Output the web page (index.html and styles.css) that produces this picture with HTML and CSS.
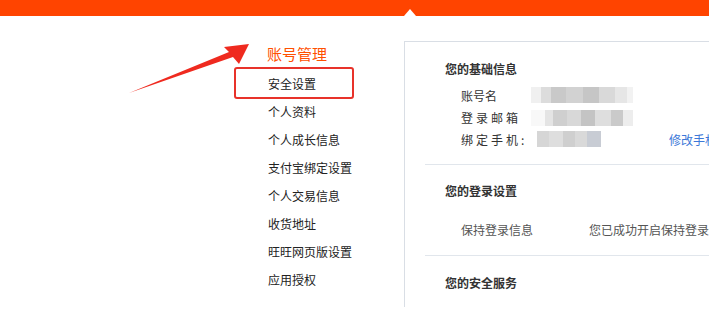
FILE: index.html
```html
<!DOCTYPE html>
<html lang="zh-CN">

<head>
  <meta charset="UTF-8">
  <title>账号管理 - 安全设置</title>
  <link rel="stylesheet" href="styles.css">
</head>

<body>
  <div class="topbar"></div>

  <div class="main">
    <div class="side">
      <h3 class="side-title">账号管理</h3>
      <ul class="menu">
        <li class="menu-item current">安全设置<span class="mark"></span></li>
        <li class="menu-item">个人资料</li>
        <li class="menu-item">个人成长信息</li>
        <li class="menu-item">支付宝绑定设置</li>
        <li class="menu-item">个人交易信息</li>
        <li class="menu-item">收货地址</li>
        <li class="menu-item">旺旺网页版设置</li>
        <li class="menu-item">应用授权</li>
      </ul>
    </div>

    <div class="panel">
      <div class="section first">
        <h4 class="section-title">您的基础信息</h4>
        <div class="info-row">
          <span class="label">账号名</span>
          <span class="mosaic m1"></span>
        </div>
        <div class="info-row">
          <span class="label spaced">登录邮箱</span>
          <span class="mosaic m2"></span>
        </div>
        <div class="info-row">
          <span class="label spaced">绑定手机:</span>
          <span class="mosaic m3"></span>
          <a class="link" href="#">修改手机</a>
        </div>
      </div>

      <div class="section">
        <h4 class="section-title">您的登录设置</h4>
        <div class="login-row">
          <span class="login-label">保持登录信息</span>
          <span class="login-text">您已成功开启保持登录</span>
        </div>
      </div>

      <div class="section last">
        <h4 class="section-title">您的安全服务</h4>
      </div>
    </div>
  </div>

  <!-- 标注箭头 -->
  <svg class="arrow" width="709" height="313" viewBox="0 0 709 313">
    <polygon points="129,93 229,52 224,47 249,44 239,64 233,57" fill="#ef2a1f" />
  </svg>
</body>

</html>
```

FILE: styles.css
```css
* {
  box-sizing: border-box;
}

body {
  margin: 0;
  background: #fff;
  font-family: "Microsoft YaHei", "Noto Sans CJK SC", sans-serif;
  font-size: 12px;
  color: #333;
  overflow: hidden;
}

.topbar {
  height: 16px;
  background-color: #ff4400;
  position: relative;
}

/* 顶部小三角 */
.topbar::after {
  content: "";
  position: absolute;
  left: 404px;
  bottom: 0;
  border-left: 6px solid transparent;
  border-right: 6px solid transparent;
  border-bottom: 7px solid #fff;
}

.main {
  display: flex;
  padding-top: 24px;
}

.side {
  width: 404px;
  flex-shrink: 0;
  padding-left: 267px;
}

.side-title {
  margin: 0;
  font-size: 15px;
  font-weight: normal;
  line-height: 28px;
  color: #ff5000;
}

.menu {
  list-style: none;
  margin: 0;
  padding: 2px 0 0 1px;
}

.menu-item {
  position: relative;
  line-height: 28px;
  height: 28px;
  color: #222;
}

/* 红色标注框 */
.mark {
  position: absolute;
  left: -34px;
  top: -3px;
  width: 120px;
  height: 32px;
  border: 2px solid #e8322a;
  border-radius: 3px;
}

.panel {
  flex: 1;
  min-width: 400px;
  margin-top: 1px;
  border-left: 1px solid #d9dee5;
  border-top: 1px solid #d9dee5;
}

.section {
  margin-left: 20px;
  padding: 16px 0 14px 20px;
  border-bottom: 1px solid #e1e6ec;
}

.section.first {
  padding-top: 17px;
}

.section.last {
  border-bottom: none;
  padding-top: 17px;
}

.section-title {
  margin: 0;
  font-size: 12px;
  line-height: 20px;
  font-weight: bold;
  color: #333;
}

.info-row {
  display: flex;
  align-items: center;
  height: 22px;
  padding-left: 16px;
}

.section.first .section-title {
  margin-bottom: 5px;
}

.label {
  width: 70px;
  flex-shrink: 0;
}

.label.spaced {
  letter-spacing: 3px;
}

/* 打码区域 */
.mosaic {
  display: inline-block;
  height: 16px;
}

.m1 {
  width: 102px;
  background: linear-gradient(to right, #f0f0f0 0 10px, #dcdcdc 10px 20px, #c9c9c9 20px 35px, #d2d2d2 35px 52px, #c6c6c6 52px 68px, #d9d9d9 68px 84px, #e6e6e6 84px 96px, #f2f2f2 96px);
}

.m2 {
  width: 102px;
  margin-top: 2px;
  background: linear-gradient(to right, #f8f8f8 0 14px, #e4e4e4 14px 22px, #cfcfcf 22px 36px, #d8d8d8 36px 50px, #c4c4c4 50px 64px, #dedede 64px 80px, #cacaca 80px 92px, #ededed 92px);
}

.m3 {
  width: 64px;
  margin-left: 6px;
  background: linear-gradient(to right, #d6d6d6 0 12px, #dedede 12px 26px, #cfcfcf 26px 38px, #d9d9d9 38px 50px, #c8ccd4 50px);
}

.link {
  margin-left: 68px;
  color: #3c78d8;
  text-decoration: none;
  white-space: nowrap;
}

.login-row {
  display: flex;
  height: 22px;
  line-height: 22px;
  margin-top: 18px;
  padding-left: 16px;
  color: #555;
}

.login-label {
  width: 128px;
  flex-shrink: 0;
}

.login-text {
  white-space: nowrap;
}

.arrow {
  position: absolute;
  left: 0;
  top: 0;
  pointer-events: none;
}
```
